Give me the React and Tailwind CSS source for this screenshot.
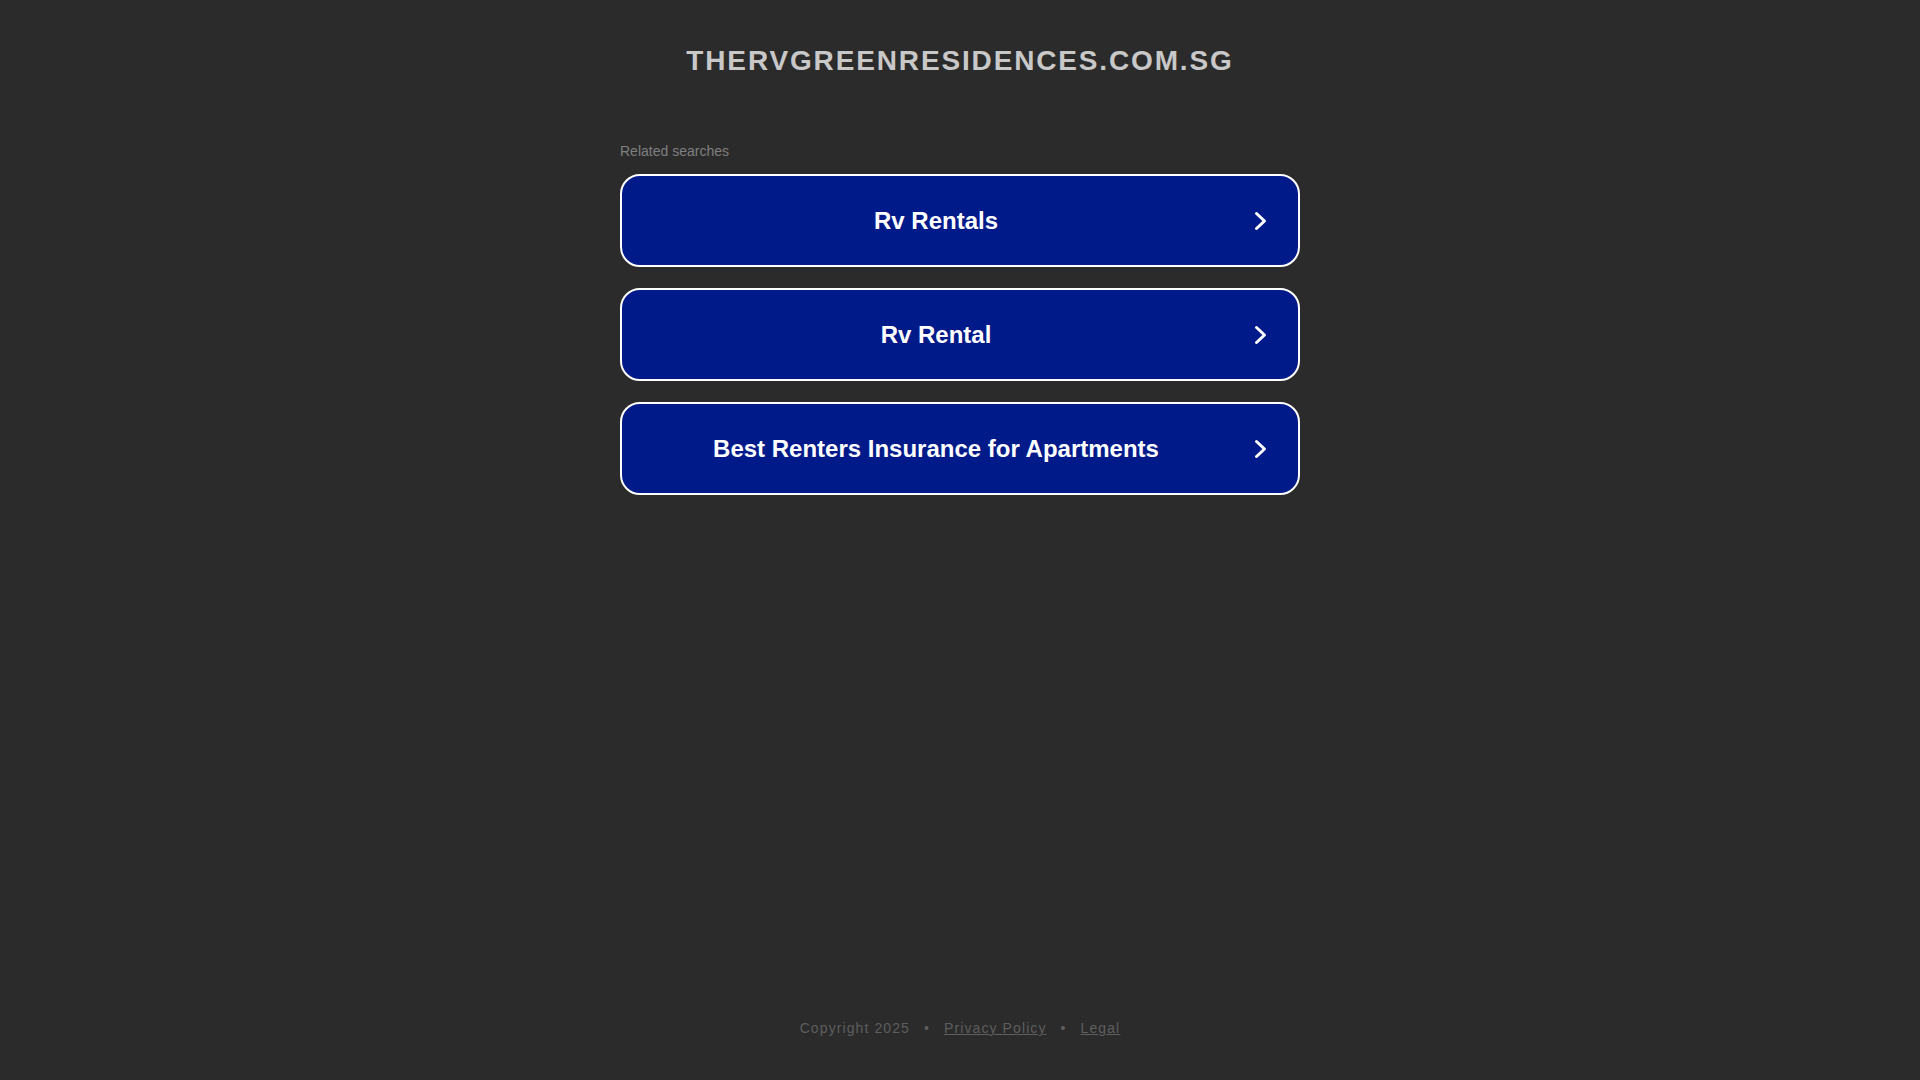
const searches = [
  'Rv Rentals',
  'Rv Rental',
  'Best Renters Insurance for Apartments',
];

const Chevron = () => (
  <svg width="16" height="20" viewBox="0 0 16 20" className="shrink-0">
    <path
      d="M3.5 2.5 L11.5 10 L3.5 17.5"
      fill="none"
      stroke="#ffffff"
      strokeWidth="3"
      strokeLinecap="round"
      strokeLinejoin="round"
    />
  </svg>
);

const App = () => {
  return (
    <div className="min-h-screen flex flex-col bg-[#2b2b2b] font-['Liberation_Sans',Arial,sans-serif]">
      {/* Header */}
      <div className="pt-[45px] text-center">
        <h1 className="text-[28px] leading-[32px] font-bold tracking-[1.85px] text-[#c8c8c8]">
          THERVGREENRESIDENCES.COM.SG
        </h1>
      </div>

      {/* Related searches */}
      <div className="w-[680px] mx-auto mt-[66px]">
        <p className="text-[14px] leading-[16px] text-[#7f7f7f] mb-[15px]">Related searches</p>
        <div className="flex flex-col gap-[21px]">
          {searches.map((s) => (
            <a
              key={s}
              href="#"
              className="h-[93px] flex items-center pr-[29px] bg-[#011a8a] border-2 border-white rounded-[20px] text-white"
            >
              <span className="flex-1 mr-[3px] text-center text-[24px] font-bold">{s}</span>
              <Chevron />
            </a>
          ))}
        </div>
      </div>

      {/* Footer */}
      <div className="mt-auto pb-[44px] flex justify-center text-[14px] leading-[16px] tracking-[1.1px] text-[#5e5e5e]">
        <span>Copyright 2025</span>
        <span className="px-[14px]">•</span>
        <a href="#" className="underline">Privacy Policy</a>
        <span className="px-[14px]">•</span>
        <a href="#" className="underline">Legal</a>
      </div>
    </div>
  );
};

export default App;
